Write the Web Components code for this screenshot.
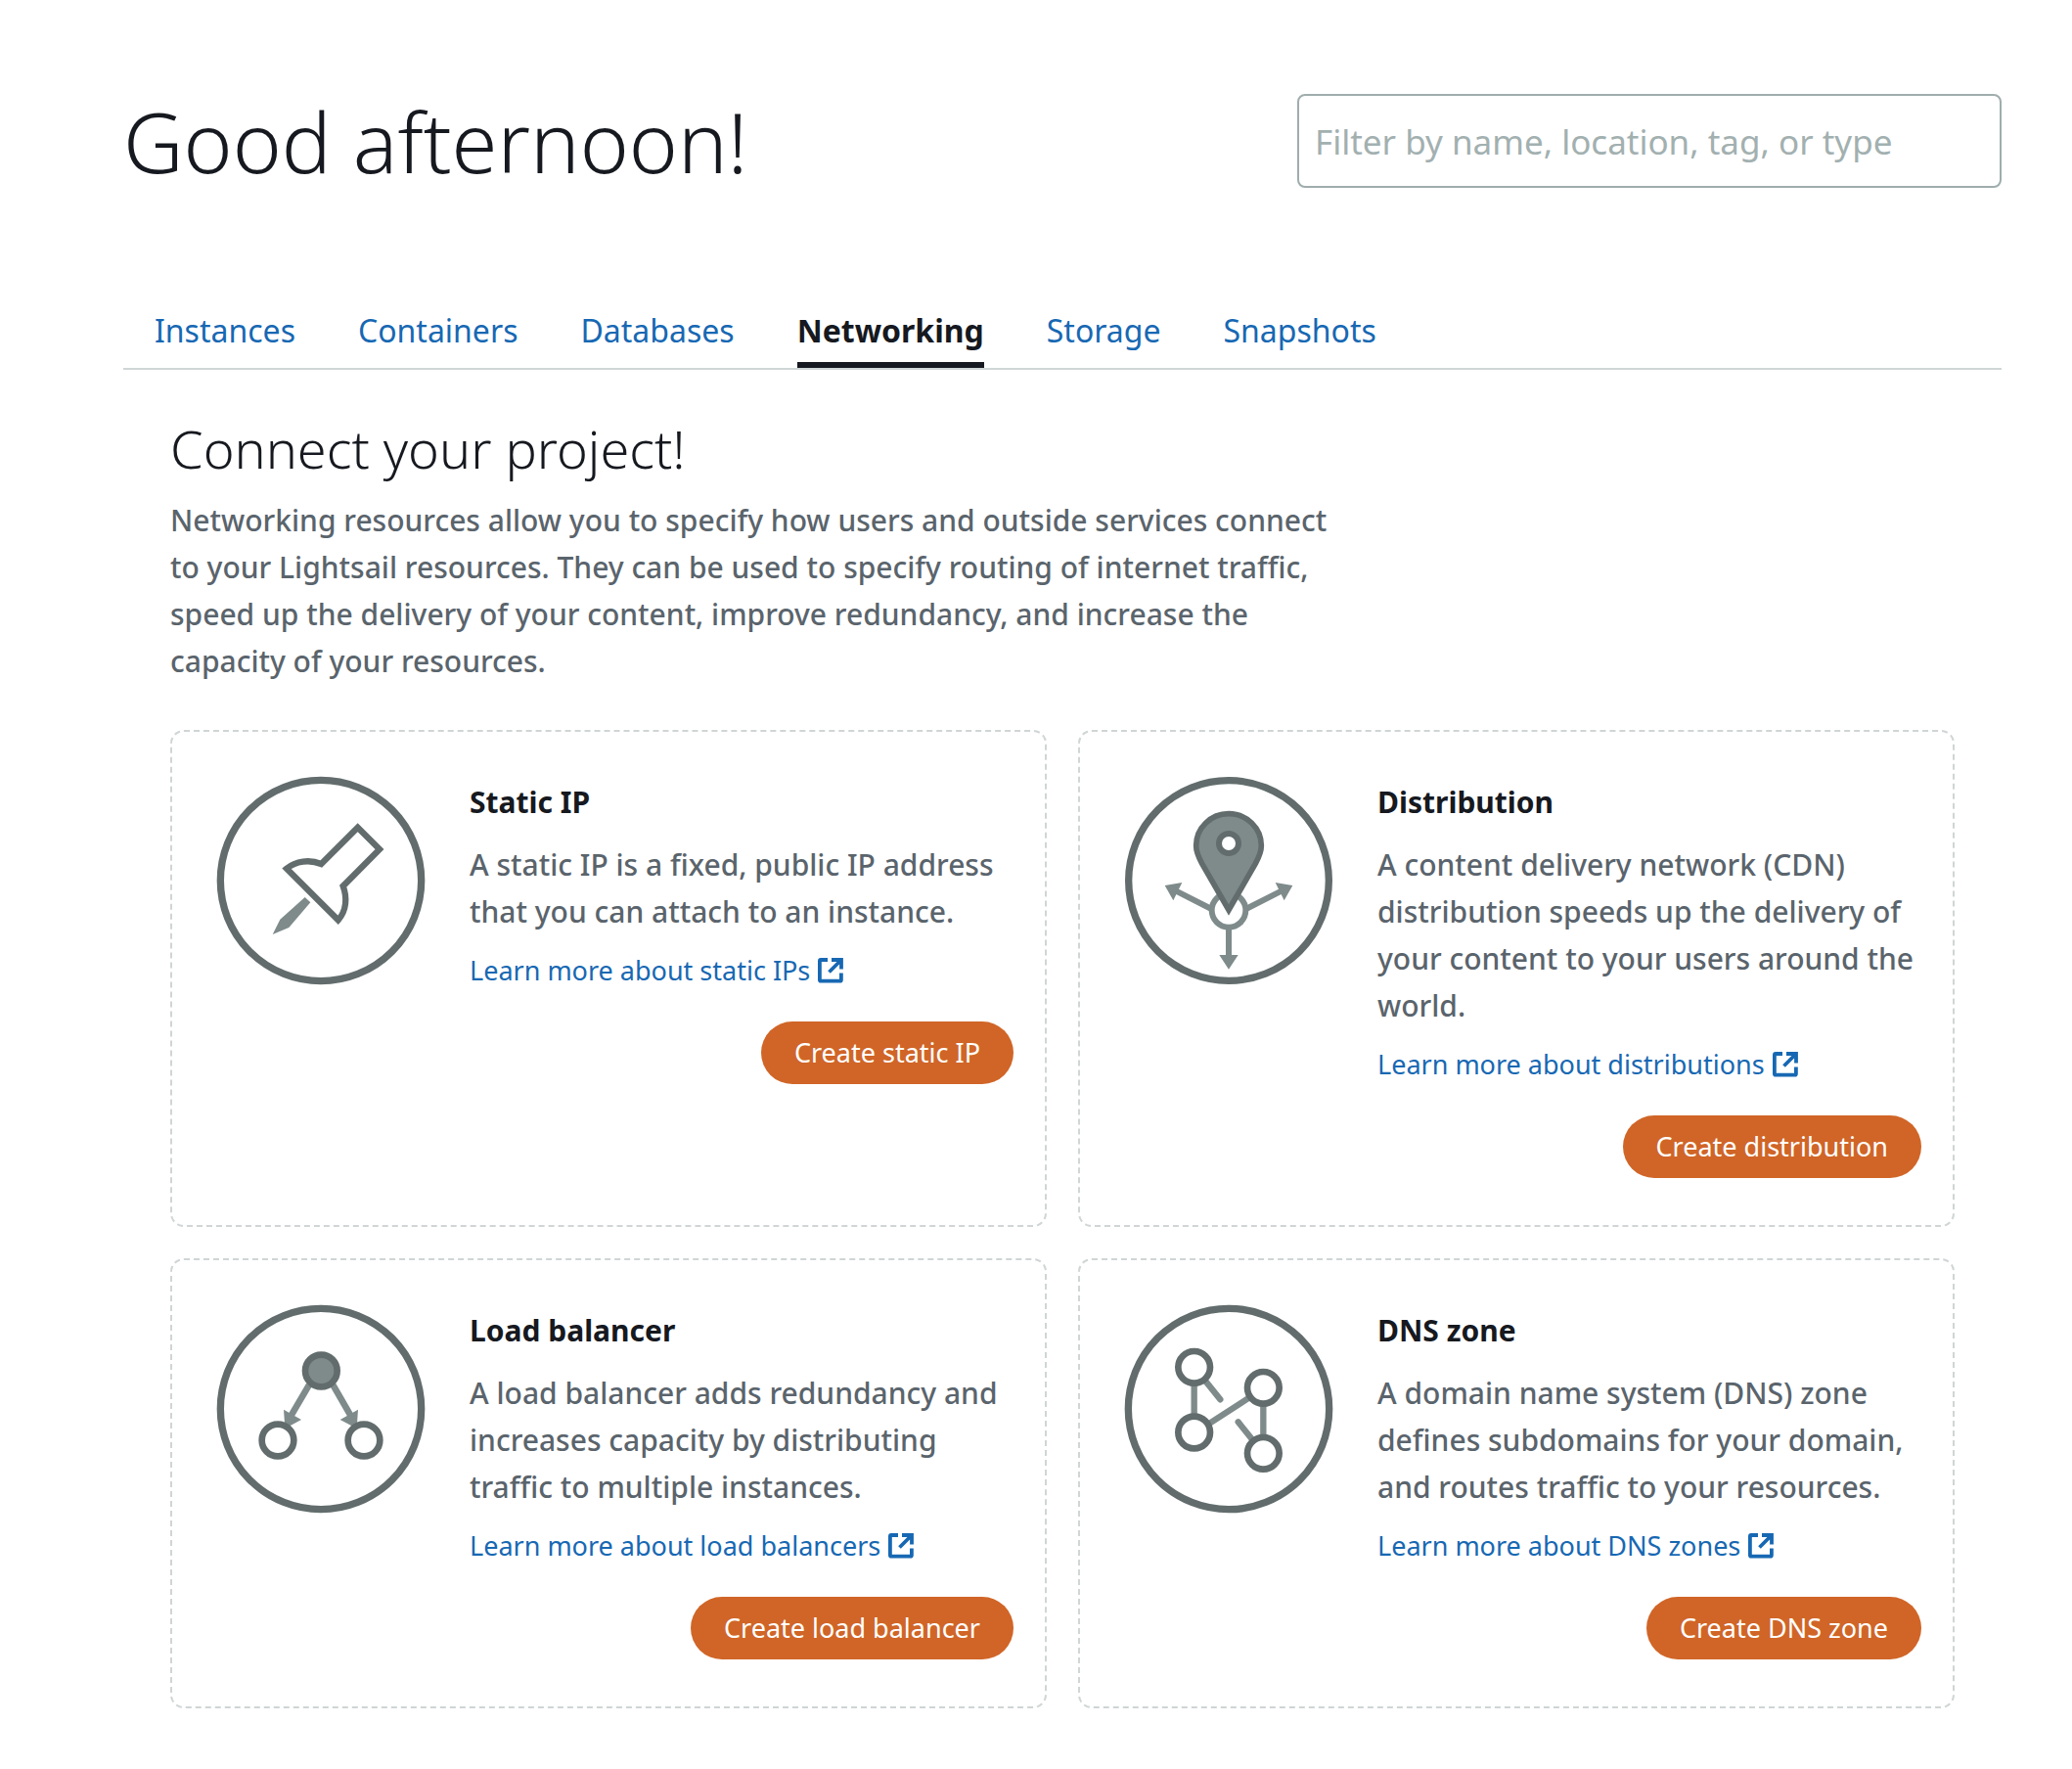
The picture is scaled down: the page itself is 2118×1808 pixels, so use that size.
<!DOCTYPE html>
<html lang="en">
<head>
<meta charset="utf-8">
<meta name="viewport" content="width=device-width, initial-scale=1">
<title>Lightsail</title>
<style>
  body {
    margin: 0;
    background: #fff;
    color: #16191f;
    font-family: "Noto Sans", "Open Sans", sans-serif;
    --ink: #16191f;
    --muted: #5a646c;
    --link: #1768b3;
    --line: #d0d5d5;
    --accent: #d06527;
    --body-size: 30px;
    --control-size: 27px;
  }
</style>
</head>
<body>
<ls-home></ls-home>

<script>
const define = (name, html, setup) => {
  const template = document.createElement('template');
  template.innerHTML = html;
  customElements.define(name, class extends HTMLElement {
    connectedCallback() {
      if (this.shadowRoot) return;
      this.attachShadow({ mode: 'open' }).append(template.content.cloneNode(true));
      if (setup) setup(this, this.shadowRoot);
    }
  });
};

const ART = {
  pin: `<svg viewBox="37 42 636 636">
    <circle class="ring" cx="355" cy="360" r="308"/>
    <path d="M250 323 L408 481 C434 452 436 412 423 377 L535 264 L468 197 L356 309 C320 294 278 300 250 323 Z" fill="none" stroke="#626c6c" stroke-width="19"/>
    <path d="M306 411 L323 427 L257 504 L207 525 L230 479 Z" fill="#7f8b8b"/>
  </svg>`,
  distribution: `<svg viewBox="30 42 636 636">
    <circle class="ring" cx="348" cy="360" r="307"/>
    <g stroke="#7f8b8b" stroke-width="18" fill="none">
      <circle cx="348" cy="451" r="52"/>
      <path d="M348 503 V595 M295 447 L185 391 M401 447 L511 391"/>
    </g>
    <path d="M319 588 H377 L348 632 Z M152 375 L205 366 L178 421 Z M544 375 L491 366 L518 421 Z" fill="#7f8b8b"/>
    <path d="M348 450 L266 308 C254 286 248 272 248 253 A100 98 0 0 1 448 253 C448 272 442 286 430 308 Z" fill="#7f8b8b" stroke="#626c6c" stroke-width="17"/>
    <circle cx="348" cy="246" r="30" fill="#fff" stroke="#626c6c" stroke-width="18"/>
  </svg>`,
  balancer: `<svg viewBox="35 40 636 636">
    <circle class="ring" cx="353" cy="358" r="308"/>
    <path d="M317 284 L262 378 M390 284 L444 378" stroke="#7f8b8b" stroke-width="20"/>
    <path d="M239 360 L293 391 L243 418 Z M467 360 L412 391 L463 418 Z" fill="#7f8b8b"/>
    <g stroke="#626c6c" stroke-width="20" fill="#fff">
      <circle cx="354" cy="241" r="49" fill="#7f8b8b"/>
      <circle cx="221" cy="454" r="49"/>
      <circle cx="485" cy="454" r="49"/>
    </g>
  </svg>`,
  dns: `<svg viewBox="30 42 636 636">
    <circle class="ring" cx="348" cy="360" r="308"/>
    <path d="M242 280 V380 M454 345 V445 M285 407 L410 326 M275 272 L322 331 M377 400 L425 460" fill="none" stroke="#7f8b8b" stroke-width="19" stroke-linecap="round"/>
    <g stroke="#626c6c" stroke-width="20" fill="#fff">
      <circle cx="242" cy="232" r="49"/>
      <circle cx="242" cy="432" r="49"/>
      <circle cx="454" cy="295" r="49"/>
      <circle cx="454" cy="496" r="49"/>
    </g>
  </svg>`
};

define('ls-art', `
  <style>
    :host { display: block; flex: none; width: 212px; height: 212px; }
    svg { display: block; width: 100%; height: 100%; overflow: visible; }
    .ring { fill: none; stroke: #626c6c; stroke-width: 22; }
  </style>`,
  (host, root) => root.append(document.createRange().createContextualFragment(ART[host.getAttribute('name')])));

define('ls-external-link', `
  <style>
    :host { display: block; font-size: var(--control-size); line-height: 40px; }
    a { display: inline-flex; align-items: center; gap: 8px; color: var(--link); text-decoration: none; font-weight: 400; white-space: nowrap; }
    svg { width: 26px; height: 26px; }
  </style>
  <a href="#"><slot></slot>
    <svg viewBox="0 0 26 26" fill="none" stroke="currentColor" stroke-width="3.8" aria-hidden="true">
      <path d="M10 2 H3 Q1.9 2 1.9 3.2 V22.5 Q1.9 23.7 3.1 23.7 H22.7 Q23.9 23.7 23.9 22.5 V15.5"/>
      <path d="M14 2 H24 V11.5 M23.5 2.5 L11.5 14.5"/>
    </svg>
  </a>`);

define('ls-button', `
  <style>
    :host { display: block; }
    button { display: block; height: 64px; padding: 0 34px; border: 0; border-radius: 32px; background: var(--accent); color: #fff; font: 400 var(--control-size)/64px "Noto Sans", "Open Sans", sans-serif; white-space: nowrap; cursor: pointer; }
  </style>
  <button type="button"><slot></slot></button>`);

define('ls-card', `
  <style>
    :host { display: flex; gap: 46px; box-sizing: border-box; padding: 46px 32px 48px 46px; border: 2px dashed var(--line); border-radius: 14px; }
    .text { flex: 1; min-width: 0; display: flex; flex-direction: column; padding-top: 2px; }
    h3 { margin: 0 0 16px; font-size: var(--body-size); line-height: 48px; font-weight: 700; color: var(--ink); }
    p { margin: 0 0 16px; font-size: var(--body-size); line-height: 48px; font-weight: 500; color: var(--muted); }
    .action { align-self: flex-end; margin-top: 32px; }
  </style>
  <slot name="art"></slot>
  <div class="text">
    <h3><slot name="title"></slot></h3>
    <p><slot></slot></p>
    <slot name="link"></slot>
    <div class="action"><slot name="action"></slot></div>
  </div>`);

define('ls-tab', `
  <style>
    :host { display: block; }
    a { display: block; padding-bottom: 8px; border-bottom: 6px solid transparent; color: var(--link); font-size: 32px; line-height: 48px; font-weight: 400; text-decoration: none; }
    :host([current]) a { color: var(--ink); border-color: var(--ink); font-weight: 700; }
  </style>
  <a href="#"><slot></slot></a>`,
  (host, root) => { if (host.hasAttribute('current')) root.querySelector('a').setAttribute('aria-current', 'page'); });

define('ls-tabs', `
  <style>
    :host { display: block; }
    nav { display: flex; gap: 64px; padding: 0 32px; border-bottom: 2px solid var(--line); }
  </style>
  <nav aria-label="Resources"><slot></slot></nav>`);

define('ls-filter', `
  <style>
    :host { display: block; width: 720px; }
    input { display: block; box-sizing: border-box; width: 100%; height: 96px; padding: 0 16px; border: 2px solid #9fadad; border-radius: 8px; background: #fff; color: var(--ink); font: 400 35px/48px "Noto Sans", "Open Sans", sans-serif; }
    input::placeholder { color: #a2b0b0; opacity: 1; }
  </style>
  <input type="search" aria-label="Filter resources" placeholder="Filter by name, location, tag, or type">`);

define('ls-home', `
  <style>
    :host { display: block; padding: 96px 72px 62px 126px; }
    header { display: flex; justify-content: space-between; align-items: center; margin-bottom: 122px; }
    h1 { margin: 0; font-size: 85px; line-height: 96px; font-weight: 300; }
    main { padding: 46px 48px 0; }
    h2 { margin: 0 0 16px; font-size: 54px; line-height: 68px; font-weight: 300; }
    .intro { margin: 0 0 46px; max-width: 1200px; font-size: var(--body-size); line-height: 48px; font-weight: 500; color: var(--muted); }
    .cards { display: grid; grid-template-columns: 1fr 1fr; gap: 32px; }
  </style>
  <header>
    <h1>Good afternoon!</h1>
    <ls-filter></ls-filter>
  </header>
  <ls-tabs>
    <ls-tab>Instances</ls-tab>
    <ls-tab>Containers</ls-tab>
    <ls-tab>Databases</ls-tab>
    <ls-tab current>Networking</ls-tab>
    <ls-tab>Storage</ls-tab>
    <ls-tab>Snapshots</ls-tab>
  </ls-tabs>
  <main>
    <h2>Connect your project!</h2>
    <p class="intro">Networking resources allow you to specify how users and outside services connect to your Lightsail resources. They can be used to specify routing of internet traffic, speed up the delivery of your content, improve redundancy, and increase the capacity of your resources.</p>
    <div class="cards">
      <ls-card>
        <ls-art slot="art" name="pin"></ls-art>
        <span slot="title">Static IP</span>
        A static IP is a fixed, public IP address that you can attach to an instance.
        <ls-external-link slot="link">Learn more about static IPs</ls-external-link>
        <ls-button slot="action">Create static IP</ls-button>
      </ls-card>
      <ls-card>
        <ls-art slot="art" name="distribution"></ls-art>
        <span slot="title">Distribution</span>
        A content delivery network (CDN) distribution speeds up the delivery of your content to your users around the world.
        <ls-external-link slot="link">Learn more about distributions</ls-external-link>
        <ls-button slot="action">Create distribution</ls-button>
      </ls-card>
      <ls-card>
        <ls-art slot="art" name="balancer"></ls-art>
        <span slot="title">Load balancer</span>
        A load balancer adds redundancy and increases capacity by distributing traffic to multiple instances.
        <ls-external-link slot="link">Learn more about load balancers</ls-external-link>
        <ls-button slot="action">Create load balancer</ls-button>
      </ls-card>
      <ls-card>
        <ls-art slot="art" name="dns"></ls-art>
        <span slot="title">DNS zone</span>
        A domain name system (DNS) zone defines subdomains for your domain, and routes traffic to your resources.
        <ls-external-link slot="link">Learn more about DNS zones</ls-external-link>
        <ls-button slot="action">Create DNS zone</ls-button>
      </ls-card>
    </div>
  </main>`);
</script>
</body>
</html>
